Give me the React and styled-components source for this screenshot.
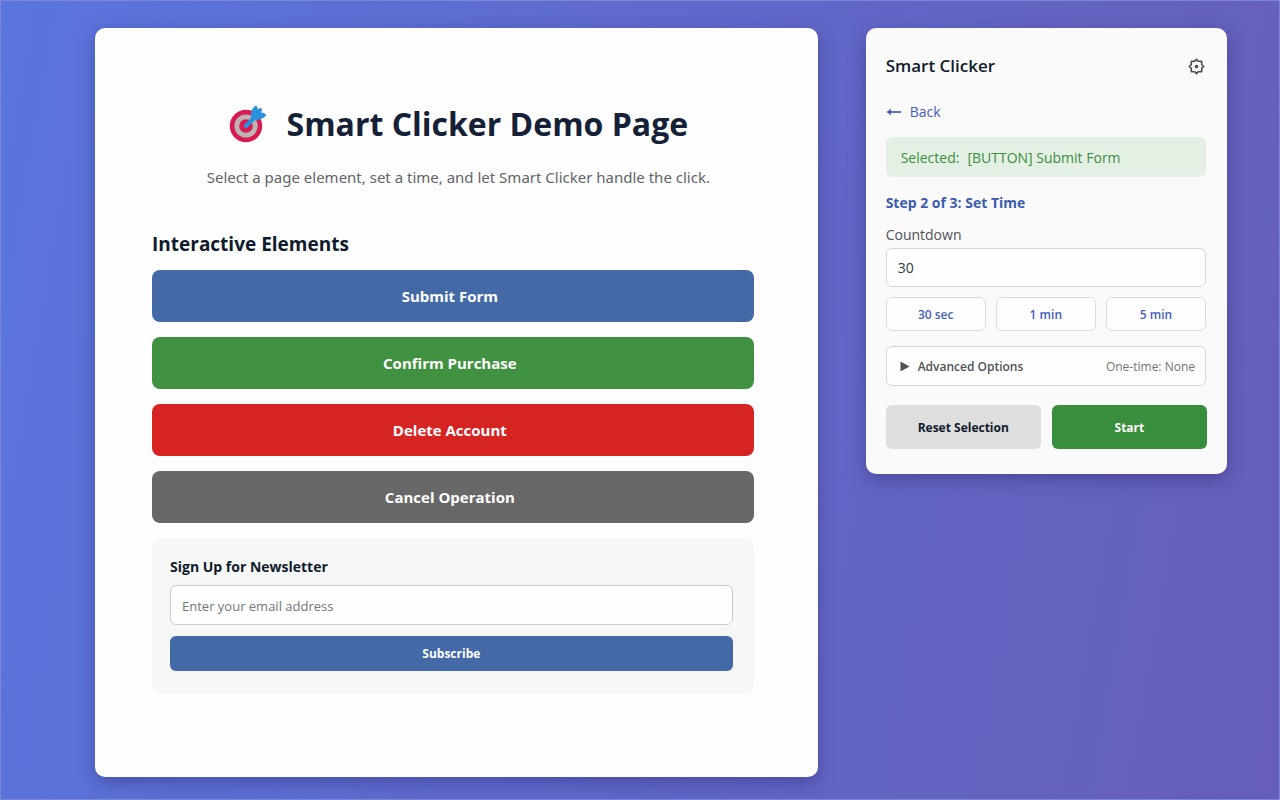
import React, { useState } from "react";
import styled, { createGlobalStyle } from "styled-components";

const GlobalStyle = createGlobalStyle`
  * {
    box-sizing: border-box;
  }
  body {
    margin: 0;
    font-family: "Segoe UI", "Open Sans", "Noto Sans", sans-serif;
    color: #0f1b2d;
  }
  button,
  input {
    font-family: inherit;
  }
  h1,
  h2,
  h3,
  p {
    margin: 0;
  }
`;

const Page = styled.div`
  min-height: 100vh;
  padding: 27px 52px 22px 94px;
  display: grid;
  grid-template-columns: 2fr 1fr;
  align-items: start;
  gap: 48px;
  background: linear-gradient(100deg, #5b75de 0%, #6069cb 50%, #665eb8 100%);
  border: 1px solid #7b86d8;
`;

const Card = styled.main`
  padding: 71px 57px 83px;
  background: #fdfdfd;
  border-radius: 10px;
  box-shadow: 0 6px 18px rgba(30, 25, 90, 0.35);
`;

const Header = styled.header`
  padding-left: 4px;
  text-align: center;
`;

const Title = styled.h1`
  display: flex;
  align-items: center;
  justify-content: center;
  gap: 20px;
  font-size: 32px;
  font-weight: 700;
  line-height: 50px;
  color: #152136;
`;

const Subtitle = styled.p`
  margin-top: 16px;
  font-family: "Segoe UI", "Noto Sans", sans-serif;
  font-size: 15px;
  line-height: 24px;
  color: #626469;
`;

const Section = styled.section`
  margin-top: 41px;
  padding-right: 7px;
`;

const SectionTitle = styled.h2`
  margin-bottom: 12px;
  font-size: 19px;
  font-weight: 700;
  line-height: 28px;
`;

const ButtonList = styled.div`
  display: flex;
  flex-direction: column;
  gap: 15px;
`;

const ActionButton = styled.button`
  height: 52px;
  padding: 0 6px 0 0;
  border: 0;
  border-radius: 8px;
  background: ${(props) => props.$color};
  color: white;
  font-size: 15px;
  font-weight: 700;
  cursor: pointer;
`;

const Newsletter = styled.form`
  display: flex;
  flex-direction: column;
  padding: 17px 21px 23px 18px;
  background: #f6f7f7;
  border-radius: 10px;
`;

const NewsletterTitle = styled.h3`
  margin-bottom: 6px;
  font-size: 14px;
  font-weight: 700;
  line-height: 24px;
`;

const TextInput = styled.input`
  width: 100%;
  height: 40px;
  padding: 0 11px;
  border: 1px solid #c9cacc;
  border-radius: 6px;
  background: #fefefe;
  color: #33363b;
  font-size: 14px;

  &::placeholder {
    color: #73767b;
    font-size: 13px;
    opacity: 1;
  }
`;

const SubscribeButton = styled(ActionButton)`
  height: 35px;
  padding: 0;
  margin-top: 11px;
  border-radius: 6px;
  font-size: 12px;
`;

const Panel = styled.aside`
  padding: 24px 20px 25px;
  background: #fafafb;
  border-radius: 10px;
  box-shadow: 0 6px 18px rgba(30, 25, 90, 0.35);
`;

const PanelHeader = styled.div`
  display: flex;
  align-items: center;
  justify-content: space-between;
`;

const PanelTitle = styled.h2`
  font-size: 17px;
  font-weight: 600;
  line-height: 28px;
`;

const IconButton = styled.button`
  display: flex;
  padding: 0;
  margin-right: 2px;
  border: 0;
  background: none;
  color: #4a4c50;
  cursor: pointer;
`;

const BackLink = styled.a`
  display: inline-flex;
  align-items: center;
  gap: 8px;
  margin-top: 22px;
  color: #4360bd;
  font-size: 14px;
  line-height: 20px;
  text-decoration: none;
`;

const Selected = styled.p`
  display: flex;
  gap: 8px;
  margin-top: 15px;
  padding: 11px 15px 9px;
  background: #e5f0e5;
  border-radius: 6px;
  color: #388e3c;
  font-size: 14px;
  line-height: 20px;
`;

const StepTitle = styled.h3`
  margin-top: 16px;
  color: #3a5bb0;
  font-size: 14px;
  font-weight: 700;
  line-height: 20px;
`;

const Label = styled.label`
  display: block;
  margin: 12px 0 3px;
  color: #505256;
  font-size: 14px;
  line-height: 20px;
`;

const CountdownInput = styled(TextInput)`
  height: 39px;
  border-color: #d6d7d9;
`;

const Presets = styled.div`
  display: grid;
  grid-template-columns: repeat(3, 1fr);
  gap: 10px;
  margin-top: 10px;
`;

const PresetButton = styled.button`
  height: 34px;
  border: 1px solid #d3dcee;
  border-radius: 6px;
  background: #fefefe;
  color: #4360bd;
  font-size: 12px;
  font-weight: 600;
  cursor: pointer;
`;

const Advanced = styled.button`
  display: flex;
  align-items: center;
  width: 100%;
  height: 40px;
  margin-top: 15px;
  padding: 0 10px 0 13px;
  border: 1px solid #d6d7d9;
  border-radius: 6px;
  background: #fefefe;
  color: #505256;
  font-size: 12px;
  font-weight: 600;
  cursor: pointer;
`;

const AdvancedLabel = styled.span`
  flex: 1;
  margin-left: 8px;
  text-align: left;
`;

const AdvancedValue = styled.span`
  color: #73767b;
  font-weight: 400;
`;

const PanelFields = styled.div`
  padding-right: 1px;
`;

const PanelActions = styled.div`
  display: grid;
  grid-template-columns: 1fr 1fr;
  gap: 11px;
  margin-top: 19px;
`;

const PanelButton = styled.button`
  height: 44px;
  border: 0;
  border-radius: 6px;
  background: ${(props) => (props.$primary ? "#388e3c" : "#dedede")};
  color: ${(props) => (props.$primary ? "white" : "#0f1b2d")};
  font-size: 12px;
  font-weight: 700;
  cursor: pointer;
`;

const actions = [
  { label: "Submit Form", color: "#4369a6" },
  { label: "Confirm Purchase", color: "#409241" },
  { label: "Delete Account", color: "#d62422" },
  { label: "Cancel Operation", color: "#686868" },
];

const presets = [
  { label: "30 sec", seconds: 30 },
  { label: "1 min", seconds: 60 },
  { label: "5 min", seconds: 300 },
];

function TargetIcon() {
  return (
    <svg width="38" height="38" viewBox="0 0 38 38" aria-hidden="true">
      <circle cx="17" cy="21" r="16.2" fill="#d81b50" />
      <circle cx="17" cy="21" r="11.6" fill="#bdb5b3" />
      <circle cx="17" cy="21" r="6.8" fill="#d81b50" />
      <path d="M17 21 L26 12" stroke="#2a92dc" strokeWidth="4.4" strokeLinecap="round" />
      <path
        d="M22.5 15.5 C21 9 22.5 3.5 26.5 0.8 Q28.6 1 28.8 4.6 Q30.5 2.4 32.4 3.2 Q33.6 4.8 32 7.6 Q36 7.6 37.3 10.6 C34 14 29 16 22.5 15.5 Z"
        fill="#2a92dc"
      />
    </svg>
  );
}

// eight rounded teeth around a small hub
function GearIcon() {
  return (
    <svg width="17" height="17" viewBox="0 0 17 17" fill="none" aria-hidden="true">
      <path
        d="M8.5 1.2 L10.2 3.2 L13.6 3.4 L13.8 6.8 L15.8 8.5 L13.8 10.2 L13.6 13.6 L10.2 13.8 L8.5 15.8 L6.8 13.8 L3.4 13.6 L3.2 10.2 L1.2 8.5 L3.2 6.8 L3.4 3.4 L6.8 3.2 Z"
        stroke="currentColor"
        strokeWidth="1.6"
        strokeLinejoin="round"
      />
      <circle cx="8.5" cy="8.5" r="1.8" fill="currentColor" />
    </svg>
  );
}

function ArrowIcon() {
  return (
    <svg width="16" height="8" viewBox="0 0 16 8" aria-hidden="true">
      <path d="M3 4 H15" stroke="currentColor" strokeWidth="1.8" />
      <path d="M0.5 4 L5 0.8 V7.2 Z" fill="currentColor" />
    </svg>
  );
}

function TriangleIcon() {
  return (
    <svg width="10" height="11" viewBox="0 0 10 11" aria-hidden="true">
      <path d="M0.5 0.5 L9.5 5.5 L0.5 10.5 Z" fill="currentColor" />
    </svg>
  );
}

function DemoPage() {
  const [email, setEmail] = useState("");

  return (
    <Card>
      <Header>
        <Title>
          <TargetIcon />
          Smart Clicker Demo Page
        </Title>
        <Subtitle>
          Select a page element, set a time, and let Smart Clicker handle the click.
        </Subtitle>
      </Header>

      <Section>
        <SectionTitle>Interactive Elements</SectionTitle>
        <ButtonList>
          {actions.map((action) => (
            <ActionButton key={action.label} type="button" $color={action.color}>
              {action.label}
            </ActionButton>
          ))}

          <Newsletter onSubmit={(e) => e.preventDefault()}>
            <NewsletterTitle>
              <label htmlFor="email">Sign Up for Newsletter</label>
            </NewsletterTitle>
            <TextInput
              id="email"
              type="email"
              placeholder="Enter your email address"
              value={email}
              onChange={(e) => setEmail(e.target.value)}
            />
            <SubscribeButton type="submit" $color="#4369a6">
              Subscribe
            </SubscribeButton>
          </Newsletter>
        </ButtonList>
      </Section>
    </Card>
  );
}

function ClickerPanel() {
  const [countdown, setCountdown] = useState("30");

  return (
    <Panel>
      <PanelHeader>
        <PanelTitle>Smart Clicker</PanelTitle>
        <IconButton type="button" aria-label="Settings">
          <GearIcon />
        </IconButton>
      </PanelHeader>

      <BackLink href="#back">
        <ArrowIcon />
        Back
      </BackLink>

      <PanelFields>
        <Selected>
          <span>Selected:</span>
          <span>[BUTTON] Submit Form</span>
        </Selected>

        <StepTitle>Step 2 of 3: Set Time</StepTitle>
        <Label htmlFor="countdown">Countdown</Label>
        <CountdownInput
          id="countdown"
          type="text"
          inputMode="numeric"
          value={countdown}
          onChange={(e) => setCountdown(e.target.value)}
        />

        <Presets>
          {presets.map((preset) => (
            <PresetButton
              key={preset.label}
              type="button"
              onClick={() => setCountdown(String(preset.seconds))}
            >
              {preset.label}
            </PresetButton>
          ))}
        </Presets>

        <Advanced type="button" aria-expanded="false">
          <TriangleIcon />
          <AdvancedLabel>Advanced Options</AdvancedLabel>
          <AdvancedValue>One-time: None</AdvancedValue>
        </Advanced>
      </PanelFields>

      <PanelActions>
        <PanelButton type="button">Reset Selection</PanelButton>
        <PanelButton type="button" $primary>
          Start
        </PanelButton>
      </PanelActions>
    </Panel>
  );
}

export default function App() {
  return (
    <>
      <GlobalStyle />
      <Page>
        <DemoPage />
        <ClickerPanel />
      </Page>
    </>
  );
}
